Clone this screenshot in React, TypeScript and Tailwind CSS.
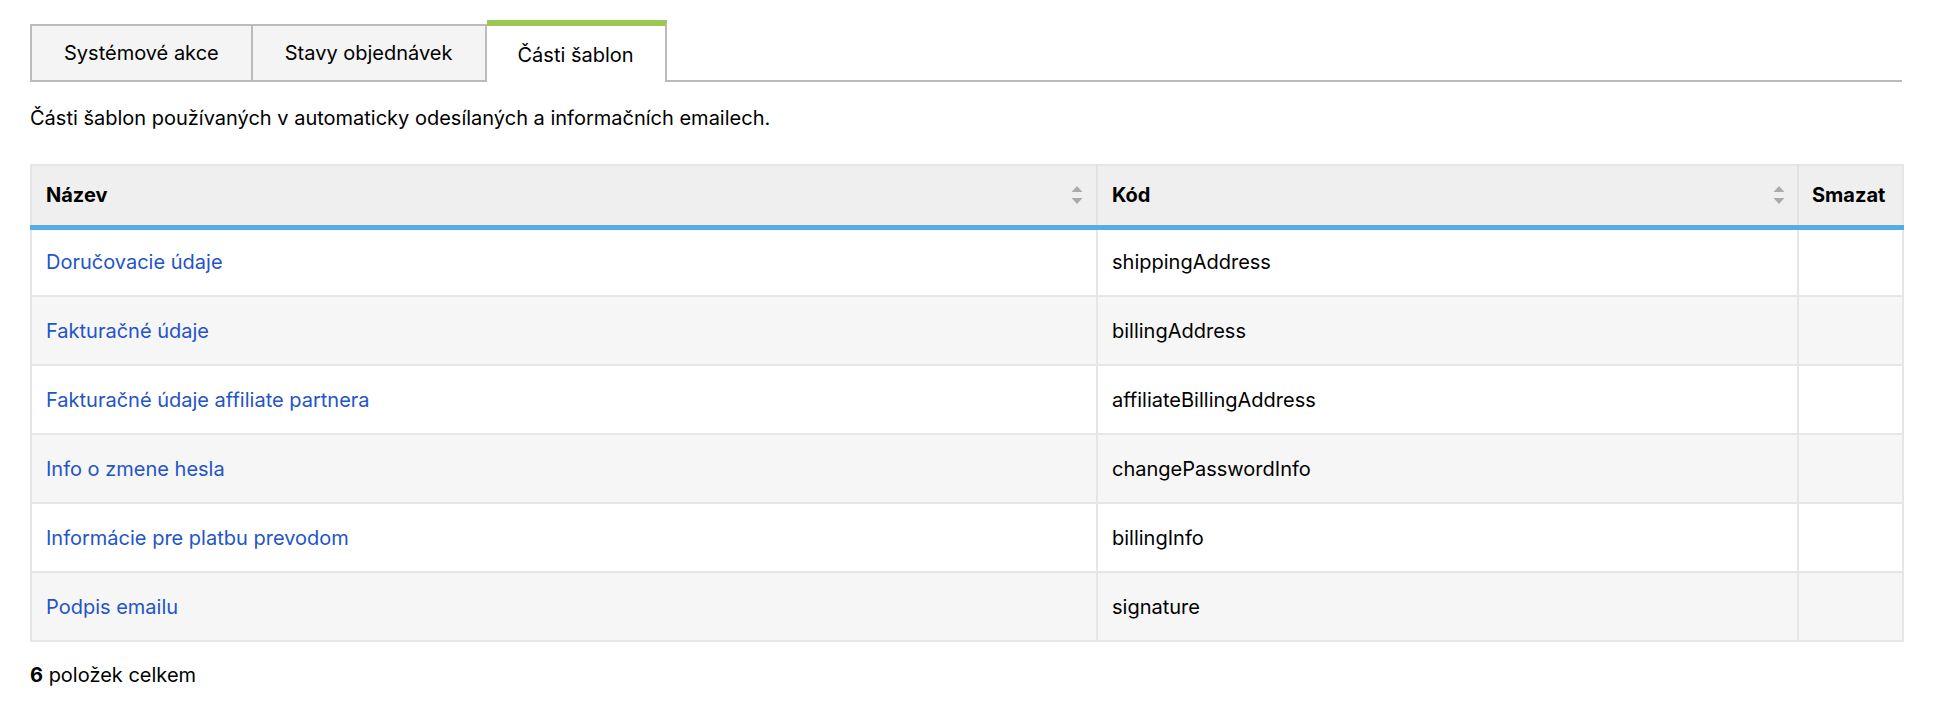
import React from "react";

const rows = [
  ["Doručovacie údaje", "shippingAddress"],
  ["Fakturačné údaje", "billingAddress"],
  ["Fakturačné údaje affiliate partnera", "affiliateBillingAddress"],
  ["Info o zmene hesla", "changePasswordInfo"],
  ["Informácie pre platbu prevodom", "billingInfo"],
  ["Podpis emailu", "signature"],
];

function SortIcon() {
  return (
    <svg width="12" height="18" viewBox="0 0 12 18" className="shrink-0">
      <polygon points="6,0 11.5,6 0.5,6" fill="#aaaaaa" />
      <polygon points="0.5,12 11.5,12 6,18" fill="#aaaaaa" />
    </svg>
  );
}

export default function App() {
  return (
    <div
      className="bg-white min-h-[710px] pl-[30px] pr-[32px] pt-[20px] text-black"
      style={{ fontFamily: "Inter, 'Noto Sans', sans-serif" }}
    >
      {/* Tabs */}
      <div className="flex items-end border-b-2 border-[#bbbbbb] h-[62px]">
        <div className="h-[56px] flex items-center justify-center px-[32px] bg-[#f4f4f4] border-2 border-b-0 border-[#bbbbbb] text-[20px]">
          Systémové akce
        </div>
        <div className="h-[56px] flex items-center justify-center px-[32px] bg-[#f4f4f4] border-2 border-l-0 border-b-0 border-[#bbbbbb] text-[20px]">
          Stavy objednávek
        </div>
        <div className="h-[62px] -mb-[2px] flex items-center justify-center px-[31px] bg-white border-t-[6px] border-t-[#9bc853] border-r-2 border-r-[#bbbbbb] text-[20px] pt-[2px]">
          Části šablon
        </div>
      </div>

      {/* Description */}
      <p className="text-[20px] mt-[24px] leading-[24px]">
        Části šablon používaných v automaticky odesílaných a informačních emailech.
      </p>

      {/* Table */}
      <table className="mt-[34px] w-[1872px] border-collapse text-[20px] table-fixed">
        <colgroup>
          <col className="w-[1066px]" />
          <col className="w-[701px]" />
          <col className="w-[105px]" />
        </colgroup>
        <thead>
          <tr className="bg-[#efefef] border-2 border-[#e6e6e6] border-b-[5px] border-b-[#55ade5]">
            <th className="h-[62px] pl-[14px] pr-[13px] text-left font-bold border-r-2 border-[#e2e2e2]">
              <div className="flex items-center justify-between">
                <span>Název</span>
                <SortIcon />
              </div>
            </th>
            <th className="h-[62px] pl-[14px] pr-[12px] text-left font-bold border-r-2 border-[#e2e2e2]">
              <div className="flex items-center justify-between">
                <span>Kód</span>
                <SortIcon />
              </div>
            </th>
            <th className="h-[62px] pl-[13px] text-left font-bold">Smazat</th>
          </tr>
        </thead>
        <tbody>
          {rows.map(([name, code], i) => (
            <tr
              key={code}
              className={`${i % 2 === 0 ? "bg-white" : "bg-[#f6f6f6]"} border-2 border-[#e6e6e6]`}
            >
              <td className="h-[69px] pl-[14px] text-[#2354c8] border-r-2 border-[#e6e6e6]">
                {name}
              </td>
              <td className="h-[69px] pl-[14px] border-r-2 border-[#e6e6e6]">{code}</td>
              <td className="h-[69px]"></td>
            </tr>
          ))}
        </tbody>
      </table>

      {/* Footer */}
      <p className="text-[20px] mt-[21px] leading-[24px]">
        <span className="font-bold">6</span> položek celkem
      </p>
    </div>
  );
}
